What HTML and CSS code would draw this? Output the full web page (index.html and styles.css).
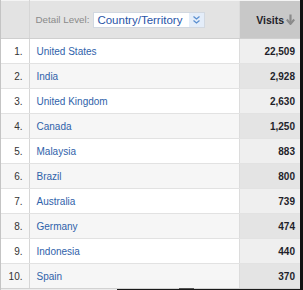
FILE: index.html
```html
<!DOCTYPE html>
<html>
<head>
<meta charset="utf-8">
<link rel="stylesheet" href="styles.css">
</head>
<body>
<div class="frame">
  <table class="report">
    <colgroup>
      <col class="w-rank">
      <col class="w-dim">
      <col class="w-val">
    </colgroup>
    <thead>
      <tr>
        <th class="c-rank"></th>
        <th class="c-dim">
          <div class="dim-head">
            <span class="dim-label">Detail Level:</span>
            <span class="select">
              <span class="select-text">Country/Territory</span>
              <span class="select-btn">
                <svg width="9" height="10" viewBox="0 0 9 10"><path d="M1.5 1.5 L4.5 4 L7.5 1.5 M1.5 5.5 L4.5 8 L7.5 5.5" fill="none" stroke="#5a8fd0" stroke-width="1.3"/></svg>
              </span>
            </span>
          </div>
        </th>
        <th class="c-val">
          <span class="val-head">Visits
            <svg class="arrow" width="9" height="11" viewBox="0 0 9 11"><path d="M4.5 0.5 V8.5" stroke="#8a8a8a" stroke-width="2.2"/><path d="M0.8 5.5 L4.5 10 L8.2 5.5" fill="none" stroke="#8a8a8a" stroke-width="2"/></svg>
          </span>
        </th>
      </tr>
    </thead>
    <tbody>
      <tr><td class="c-rank">1.</td><td class="c-dim"><a>United States</a></td><td class="c-val">22,509</td></tr>
      <tr><td class="c-rank">2.</td><td class="c-dim"><a>India</a></td><td class="c-val">2,928</td></tr>
      <tr><td class="c-rank">3.</td><td class="c-dim"><a>United Kingdom</a></td><td class="c-val">2,630</td></tr>
      <tr><td class="c-rank">4.</td><td class="c-dim"><a>Canada</a></td><td class="c-val">1,250</td></tr>
      <tr><td class="c-rank">5.</td><td class="c-dim"><a>Malaysia</a></td><td class="c-val">883</td></tr>
      <tr><td class="c-rank">6.</td><td class="c-dim"><a>Brazil</a></td><td class="c-val">800</td></tr>
      <tr><td class="c-rank">7.</td><td class="c-dim"><a>Australia</a></td><td class="c-val">739</td></tr>
      <tr><td class="c-rank">8.</td><td class="c-dim"><a>Germany</a></td><td class="c-val">474</td></tr>
      <tr><td class="c-rank">9.</td><td class="c-dim"><a>Indonesia</a></td><td class="c-val">440</td></tr>
      <tr><td class="c-rank">10.</td><td class="c-dim"><a>Spain</a></td><td class="c-val">370</td></tr>
    </tbody>
  </table>
  <div class="footer">
    <div class="footer-line"></div>
    <div class="footer-shadow"><span class="thumb"></span></div>
  </div>
</div>
</body>
</html>
```

FILE: styles.css
```css
html, body {
  margin: 0;
  padding: 0;
  background: #ffffff;
}
.frame {
  width: 303px;
  height: 290px;
  box-sizing: border-box;
  border-left: 1px solid #c4c4c4;
  border-right: 3px solid #111;
  overflow: hidden;
  display: flex;
  flex-direction: column;
  font-family: "Liberation Sans", Arial, sans-serif;
  font-size: 10px;
  color: #333;
}
.report {
  border-collapse: collapse;
  table-layout: fixed;
  width: 299px;
  height: 284px;
  flex: none;
}
.w-rank { width: 28px; }
.w-dim { width: 210px; }
.w-val { width: 61px; }
.report th {
  height: 37px;
  padding: 0;
  background: #e3e3e3;
  border-top: 1px solid #f4f4f4;
  border-bottom: 1px solid #cfcfcf;
  font-weight: normal;
  text-align: left;
  overflow: hidden;
}
.report td {
  height: 24px;
  padding: 0;
  border-bottom: 1px solid #e2e2e2;
  vertical-align: middle;
  white-space: nowrap;
}
.report tbody tr:last-child td {
  border-bottom: 1px solid #d2d2d2;
}
.report .c-rank {
  border-right: 1px solid #d6d6d6;
  text-align: right;
  padding-right: 6px;
}
.report td.c-dim {
  padding-left: 7px;
}
.report .c-val {
  border-left: 1px solid #dcdcdc;
  text-align: right;
  padding-right: 5px;
}
.report td.c-val {
  font-weight: bold;
  color: #1f1f2a;
  background: #efefef;
}
.report tbody tr:nth-child(even) td {
  background: #f6f6f6;
}
.report tbody tr:nth-child(even) td.c-val {
  background: #e4e4e4;
}
.report a {
  color: #2f62aa;
  text-decoration: none;
}
.report th.c-val {
  background: #c8c8c8;
}
.val-head {
  display: inline-flex;
  align-items: center;
  gap: 2px;
  font-weight: bold;
  font-size: 10.5px;
  color: #1f1f2a;
}
.arrow {
  display: block;
}
.dim-head {
  display: flex;
  align-items: center;
  padding-left: 6px;
}
.dim-label {
  color: #8a8a8a;
  font-size: 9.8px;
  margin-right: 4px;
}
.select {
  display: flex;
  align-items: stretch;
  height: 16px;
  width: 112px;
  box-sizing: border-box;
  border: 1px solid #d2d8e0;
  background: #fff;
}
.select-text {
  flex: 1;
  padding-left: 3px;
  font-size: 11.5px;
  line-height: 14px;
  color: #2a55a8;
  white-space: nowrap;
}
.select-btn {
  width: 15px;
  display: flex;
  align-items: center;
  justify-content: center;
  background: #e4edf9;
}
.footer {
  flex: 1;
  display: flex;
  flex-direction: column;
  background: #ececec;
}
.footer-line {
  flex: 1;
}
.footer-shadow {
  height: 3px;
  margin-left: 116px;
  background: #1a1a1a;
  position: relative;
}
.thumb {
  position: absolute;
  left: 62px;
  top: -1px;
  width: 15px;
  height: 1px;
  background: #555;
}
```
